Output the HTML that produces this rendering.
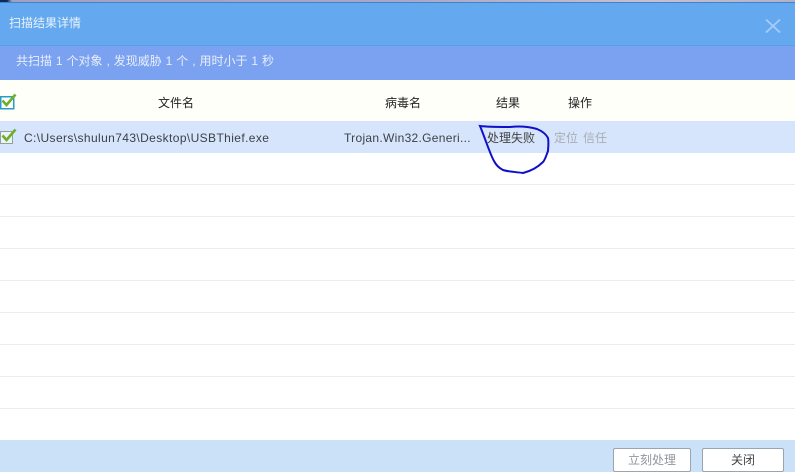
<!DOCTYPE html>
<html><head><meta charset="utf-8">
<style>
html,body{margin:0;padding:0}
body{width:795px;height:472px;position:relative;overflow:hidden;background:#fff;font-family:"Liberation Sans","Noto Sans CJK SC",sans-serif;font-size:12px;color:#333}
.a{position:absolute;white-space:nowrap}
.l{position:absolute;left:0;width:795px;height:1px;background:#ececec}
.btn{position:absolute;top:448px;height:24px;box-sizing:border-box;border:1px solid #9aa5ae;border-radius:2px;background:#fff;text-align:center;line-height:23px;font-size:12px}
</style></head><body>
<div class="a" style="left:0;top:0;width:795px;height:2px;background:linear-gradient(90deg,#0b2a5c 0,#0b2a5c 7px,#a3a0c8 12px,#a9a6c9 400px,#c8c0d0 650px,#b4b0cc 795px)"></div>
<div class="a" style="left:0;top:2px;width:795px;height:1px;background:#3f83c8"></div>
<div class="a" style="left:0;top:3px;width:795px;height:43px;background:#64a9ef"></div>
<div class="a" style="left:0;top:45px;width:795px;height:1px;background:#5b9fe6"></div>
<div class="a" style="left:0;top:46px;width:795px;height:34px;background:#7ba2f0"></div>
<div class="a" style="left:9px;top:14px;line-height:18px;color:#e8f2fd">扫描结果详情</div>
<div class="a" style="left:16px;top:52px;line-height:18px;color:#e8eefc;word-spacing:0.6px">共扫描 1 个对象 , 发现威胁 1 个 , 用时小于 1 秒</div>
<svg class="a" style="left:764px;top:17px" width="18" height="18" viewBox="0 0 18 18"><path d="M2 2.5L16 15.5M16 2.5L2 15.5" stroke="#a9cdf5" stroke-width="1.8" fill="none"/></svg>
<div class="a" style="left:0;top:80px;width:795px;height:41px;background:#fffffa"></div>
<div class="a" style="left:0;top:121px;width:795px;height:32px;background:#d6e5fb"></div>
<div class="l" style="top:184px"></div><div class="l" style="top:216px"></div><div class="l" style="top:248px"></div><div class="l" style="top:280px"></div><div class="l" style="top:312px"></div><div class="l" style="top:344px"></div><div class="l" style="top:376px"></div><div class="l" style="top:408px"></div>
<svg class="a" style="left:0;top:92px" width="18" height="18" viewBox="0 0 18 18"><rect x="0.75" y="4.75" width="13" height="12" fill="#fff" stroke="#2a9cc4" stroke-width="1.5"/><path d="M2.5 8.5L6.5 13L15.5 2.5" stroke="#6fae2c" stroke-width="2.6" fill="none"/></svg>
<svg class="a" style="left:0;top:128px" width="18" height="18" viewBox="0 0 18 18"><rect x="0.5" y="3.5" width="12" height="12" fill="#eef3f3" stroke="#8ea0a0"/><path d="M2.5 7.5L6.5 12L15.5 1.5" stroke="#6fae2c" stroke-width="2.6" fill="none"/></svg>
<div class="a" style="left:158px;top:94px;line-height:18px;color:#222">文件名</div>
<div class="a" style="left:385px;top:94px;line-height:18px;color:#222">病毒名</div>
<div class="a" style="left:496px;top:94px;line-height:18px;color:#222">结果</div>
<div class="a" style="left:568px;top:94px;line-height:18px;color:#222">操作</div>
<div class="a" style="left:24px;top:129px;line-height:18px;color:#3c4148;letter-spacing:0.39px">C:\Users\shulun743\Desktop\USBThief.exe</div>
<div class="a" style="left:344px;top:129px;line-height:18px;color:#3c4148;letter-spacing:0.3px">Trojan.Win32.Generi...</div>
<div class="a" style="left:487px;top:129px;line-height:18px;color:#444">处理失败</div>
<div class="a" style="left:554px;top:129px;line-height:18px;color:#a8adb3">定位</div>
<div class="a" style="left:583px;top:129px;line-height:18px;color:#a8adb3">信任</div>
<svg class="a" style="left:0;top:0" width="795" height="472" viewBox="0 0 795 472"><path d="M480 126C488 127 498 127 510 127C520 126 530 127 537 129C542 131 546 134 548 138C549 143 548 148 548 151C546 156 545 160 543 162C538 167 531 171 523 173C517 172 509 172 503 170C499 168 496 165 494 161C490 154 485 138 480 126Z" fill="none" stroke="#1010c8" stroke-width="2"/></svg>
<div class="a" style="left:0;top:440px;width:795px;height:32px;background:#cbe1f8"></div>
<div class="btn" style="left:613px;width:78px;color:#8f969c">立刻处理</div>
<div class="btn" style="left:702px;width:82px;color:#444">关闭</div>
</body></html>
